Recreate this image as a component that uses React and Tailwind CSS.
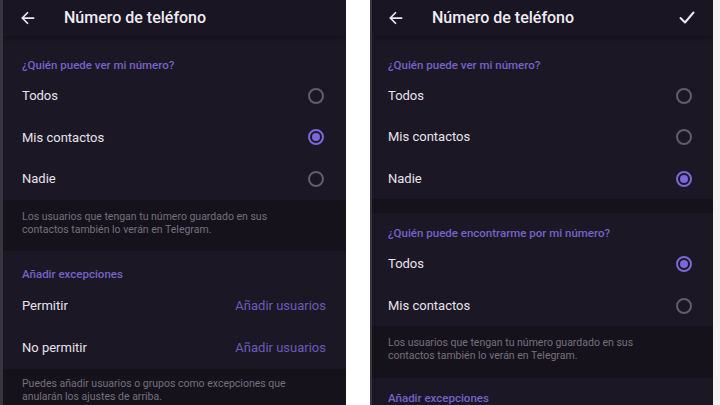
import React from "react";

const font = { fontFamily: "Roboto, 'Noto Sans', sans-serif" };

function Radio({ on }) {
  return on ? (
    <span className="flex h-[16px] w-[16px] items-center justify-center rounded-full border-[2px] border-[#7a68d8]">
      <span className="h-[8px] w-[8px] rounded-full bg-[#7a68d8]" />
    </span>
  ) : (
    <span className="h-[16px] w-[16px] rounded-full border-[2px] border-[#625e69]" />
  );
}

function Header({ check, pad }) {
  return (
    <div className={"flex h-[36px] items-center bg-[#1a1522] pr-[18px] shadow-[0_2px_6px_rgba(0,0,0,0.35)] " + pad}>
      <svg width="15" height="14" viewBox="0 0 16 16" fill="none" stroke="#ece9f2" strokeWidth="2" strokeLinecap="round" strokeLinejoin="round">
        <path d="M15 8H2M8 2L2 8l6 6" />
      </svg>
      <span className="ml-[29px] flex-1 text-[16px] font-medium text-[#eeecf3]">Número de teléfono</span>
      {check && (
        <svg width="16" height="13" viewBox="0 0 16 13" fill="none" stroke="#ece9f2" strokeWidth="2" strokeLinecap="round" strokeLinejoin="round">
          <path d="M1.5 7l4.5 4.5L14.5 1.5" />
        </svg>
      )}
    </div>
  );
}

function Label({ children, className }) {
  return (
    <div className={"text-[11.5px] font-medium leading-[14px] text-[#7662c8] " + className}>{children}</div>
  );
}

function Row({ label, on, h, right }) {
  return (
    <div className={"flex items-center justify-between " + h}>
      <span className="text-[13px] text-[#e6e3ec]">{label}</span>
      {right ? <span className="text-[13px] text-[#6a5cb8]">{right}</span> : <Radio on={on} />}
    </div>
  );
}

function Info({ children, className }) {
  return (
    <div className={"bg-[#16121c] text-[10.5px] leading-[13px] text-[#75707d] " + className}>{children}</div>
  );
}

export default function App() {
  return (
    <div className="flex h-[405px] w-[720px] bg-white" style={font}>
      {/* first screen */}
      <div className="flex h-[405px] w-[346px] flex-col overflow-hidden border-l-[3px] border-[#38353d] bg-[#1c1725]">
        <Header pad="pl-[17px]" />
        <div className="px-[19px] pr-[22px]">
          <Label className="pt-[22px] h-[39px]">¿Quién puede ver mi número?</Label>
          <Row label="Todos" h="h-[41.5px]" />
          <Row label="Mis contactos" on h="h-[41.5px]" />
          <Row label="Nadie" h="h-[41.5px]" />
        </div>
        <Info className="h-[51px] px-[19px] pt-[10px]">
          Los usuarios que tengan tu número guardado en sus
          <br />
          contactos también lo verán en Telegram.
        </Info>
        <div className="px-[19px] pr-[20px]">
          <Label className="pt-[16px] h-[34px]">Añadir excepciones</Label>
          <Row label="Permitir" right="Añadir usuarios" h="h-[42px]" />
          <Row label="No permitir" right="Añadir usuarios" h="h-[42px]" />
        </div>
        <Info className="flex-1 px-[19px] pt-[8.5px]">
          Puedes añadir usuarios o grupos como excepciones que
          <br />
          anularán los ajustes de arriba.
        </Info>
      </div>

      <div className="w-[24px]" />

      {/* second screen */}
      <div className="flex h-[405px] w-[343px] flex-col overflow-hidden border-l-[2px] border-[#38353d] bg-[#1c1725]">
        <Header check pad="pl-[16px]" />
        <div className="pl-[16px] pr-[21px]">
          <Label className="pt-[22px] h-[39px]">¿Quién puede ver mi número?</Label>
          <Row label="Todos" h="h-[41.5px]" />
          <Row label="Mis contactos" h="h-[41.5px]" />
          <Row label="Nadie" on h="h-[41.5px]" />
        </div>
        <div className="h-[14px] bg-[#16121c]" />
        <div className="pl-[16px] pr-[21px]">
          <Label className="pt-[13px] h-[30px]">¿Quién puede encontrarme por mi número?</Label>
          <Row label="Todos" on h="h-[42px]" />
          <Row label="Mis contactos" h="h-[41px]" />
        </div>
        <Info className="h-[52px] pl-[16px] pt-[9.5px]">
          Los usuarios que tengan tu número guardado en sus
          <br />
          contactos también lo verán en Telegram.
        </Info>
        <div className="pl-[16px]">
          <Label className="pt-[13px]">Añadir excepciones</Label>
        </div>
      </div>
      <div className="flex-1 bg-[#f2f2f2]" />
    </div>
  );
}
